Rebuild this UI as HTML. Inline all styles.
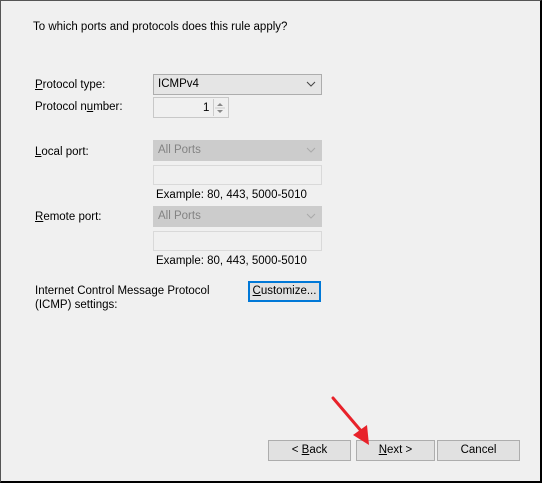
<!DOCTYPE html>
<html><head><style>
body{margin:0;width:542px;height:483px;overflow:hidden;background:#f0f0f0;font-family:"Liberation Sans",sans-serif;font-size:11.5px;color:#000}
.frame{position:absolute;left:0;top:0;width:539px;height:480px;border-left:1px solid #555;border-top:1px solid #555;border-right:2px solid #000;border-bottom:2px solid #000;box-sizing:content-box}
.a{position:absolute;white-space:nowrap;line-height:14px}
.box{position:absolute;box-sizing:border-box}
.combo{border:1px solid #adadad;background:#e5e5e5;padding-left:4px;line-height:19px}
.dis{border:1px solid #cccccc;background:#cccccc;color:#838383}
.txt{border:1px solid #d9d9d9;background:#f0f0f0}
.btn{border:1px solid #adadad;background:#e1e1e1;text-align:center;line-height:19px}
.chev{position:absolute;right:5px;top:6px}
</style></head><body>
<div class="frame"></div>
<div class="a" style="left:33px;top:20px">To which ports and protocols does this rule apply?</div>

<div class="a" style="left:35px;top:78px"><u>P</u>rotocol type:</div>
<div class="box combo" style="left:153px;top:74px;width:169px;height:21px">ICMPv4
<svg class="chev" width="10" height="6"><path d="M1 1 L5 5 L9 1" fill="none" stroke="#444" stroke-width="1"/></svg></div>

<div class="a" style="left:35px;top:100px">Protocol n<u>u</u>mber:</div>
<div class="box" style="left:153px;top:97px;width:76px;height:21px;border:1px solid #c8c8c8;background:#f0f0f0"></div>
<div class="a" style="left:203px;top:101px">1</div>
<div class="box" style="left:213px;top:99px;width:14px;height:17px;border-left:1px solid #ccc"></div>
<svg style="position:absolute;left:215px;top:101px" width="10" height="14"><path d="M2 5 L5 2 L8 5Z M2 9 L5 12 L8 9Z" fill="#888"/><line x1="0" y1="7" x2="10" y2="7" stroke="#ccc"/></svg>

<div class="a" style="left:35px;top:145px"><u>L</u>ocal port:</div>
<div class="box combo dis" style="left:153px;top:140px;width:169px;height:21px">All Ports
<svg class="chev" width="10" height="6"><path d="M1 1 L5 5 L9 1" fill="none" stroke="#aaa" stroke-width="1"/></svg></div>
<div class="box txt" style="left:153px;top:165px;width:169px;height:20px"></div>
<div class="a" style="left:156px;top:188px">Example: 80, 443, 5000-5010</div>

<div class="a" style="left:35px;top:210px"><u>R</u>emote port:</div>
<div class="box combo dis" style="left:153px;top:206px;width:169px;height:21px">All Ports
<svg class="chev" width="10" height="6"><path d="M1 1 L5 5 L9 1" fill="none" stroke="#aaa" stroke-width="1"/></svg></div>
<div class="box txt" style="left:153px;top:231px;width:169px;height:20px"></div>
<div class="a" style="left:156px;top:254px">Example: 80, 443, 5000-5010</div>

<div class="a" style="left:35px;top:284px">Internet Control Message Protocol<br>(ICMP) settings:</div>
<div class="box btn" style="left:248px;top:281px;width:73px;height:21px;border:2px solid #0078d7;line-height:17px"><u>C</u>ustomize...</div>

<div class="box btn" style="left:268px;top:440px;width:83px;height:21px">&lt; <u>B</u>ack</div>
<div class="box btn" style="left:356px;top:440px;width:79px;height:21px"><u>N</u>ext &gt;</div>
<div class="box btn" style="left:437px;top:440px;width:83px;height:21px">Cancel</div>

<svg style="position:absolute;left:0;top:0" width="542" height="483">
<line x1="333" y1="398" x2="362" y2="432" stroke="#e8222a" stroke-width="3" stroke-linecap="round"/>
<path d="M353 435 L367 425 L369 445 Z" fill="#e8222a"/>
</svg>
</body></html>
